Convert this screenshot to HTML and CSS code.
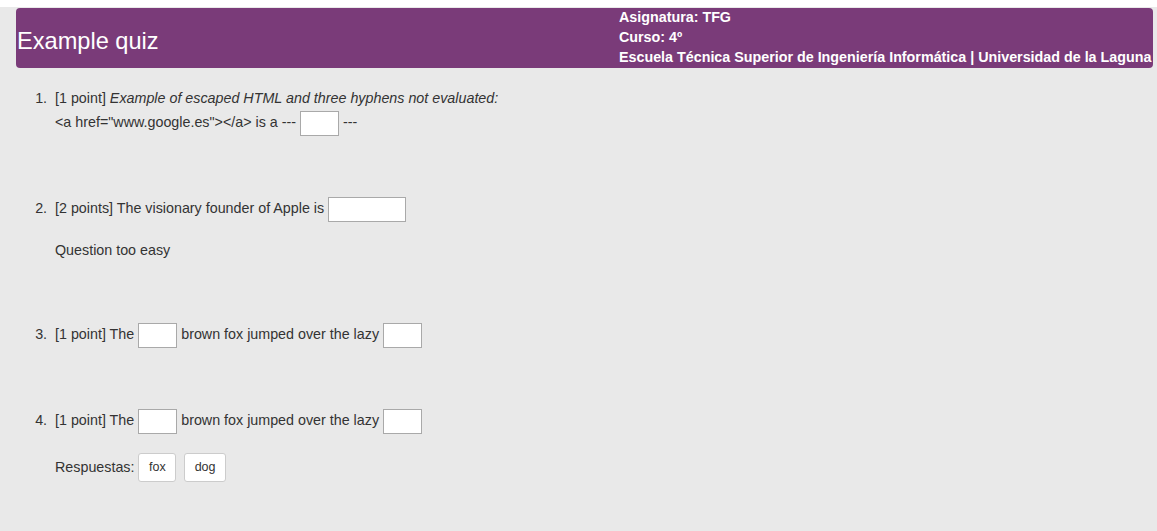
FILE: index.html
```html
<!DOCTYPE html>
<html lang="es">
<head>
<meta charset="utf-8">
<title>Example quiz</title>
<link rel="stylesheet" href="styles.css">
</head>
<body>
<div class="page">
  <header class="header">
    <h1 class="title">Example quiz</h1>
    <div class="info">
      <div>Asignatura: TFG</div>
      <div>Curso: 4º</div>
      <div>Escuela Técnica Superior de Ingeniería Informática | Universidad de la Laguna</div>
    </div>
  </header>
  <ol class="quiz">
    <li class="question">
      <div class="line">[1 point] <em>Example of escaped HTML and three hyphens not evaluated:</em></div>
      <div class="line">&lt;a href="www.google.es"&gt;&lt;/a&gt; is a --- <input class="blank" type="text"> ---</div>
    </li>
    <li class="question">
      <div class="line">[2 points] The visionary founder of Apple is <input class="blank wide" type="text"></div>
      <p class="note">Question too easy</p>
    </li>
    <li class="question">
      <div class="line">[1 point] The <input class="blank" type="text"> brown fox jumped over the lazy <input class="blank" type="text"></div>
    </li>
    <li class="question">
      <div class="line">[1 point] The <input class="blank" type="text"> brown fox jumped over the lazy <input class="blank" type="text"></div>
      <div class="answers"><span class="answers-label">Respuestas:</span><button class="chip" type="button">fox</button><button class="chip" type="button">dog</button></div>
    </li>
  </ol>
</div>
</body>
</html>
```

FILE: styles.css
```css
html, body {
  margin: 0;
  padding: 0;
  background: #ffffff;
}

.page {
  margin-top: 7px;
  background: #e9e9e9;
  min-height: 524px;
  padding: 1px 4px 0 16px;
  box-sizing: border-box;
  font-family: "Liberation Sans", Arial, sans-serif;
  font-size: 14.3px;
  color: #333333;
}

.header {
  display: grid;
  grid-template-columns: 603px 1fr;
  align-items: center;
  height: 60px;
  background: #7a3b79;
  border-radius: 4px;
  color: #ffffff;
  overflow: hidden;
}

.title {
  margin: 0;
  padding-left: 1px;
  font-size: 23.6px;
  font-weight: normal;
  line-height: 30px;
  padding-top: 6px;
}

.info {
  align-self: start;
  font-size: 14.3px;
  font-weight: bold;
  line-height: 20px;
  white-space: nowrap;
  margin-top: -1px;
}

.quiz {
  margin: 18px 0 0 0;
  padding-left: 39px;
}

.question {
  margin-bottom: 62px;
}

.question::marker {
  content: counter(list-item) ".\00a0\00a0";
}

.line {
  line-height: 24px;
}

.blank {
  display: inline-block;
  box-sizing: border-box;
  width: 39px;
  height: 25px;
  margin: -3px 0;
  padding: 0 4px;
  border: 1px solid #a9a9a9;
  background: #ffffff;
  vertical-align: middle;
  font: inherit;
}

.blank.wide {
  width: 78px;
}

.note {
  margin: 20px 0 0 0;
  line-height: 20px;
}

.answers {
  margin-top: 21px;
  display: flex;
  align-items: center;
  height: 28px;
}

.answers-label {
  margin-right: 4px;
  margin-top: -1px;
}

.chip {
  box-sizing: border-box;
  height: 29px;
  padding: 0 9.5px;
  margin: 0 8px 0 0;
  background: #ffffff;
  border: 1px solid #cccccc;
  border-radius: 3px;
  font-family: "Liberation Sans", Arial, sans-serif;
  font-size: 12.5px;
  color: #333333;
}
```
